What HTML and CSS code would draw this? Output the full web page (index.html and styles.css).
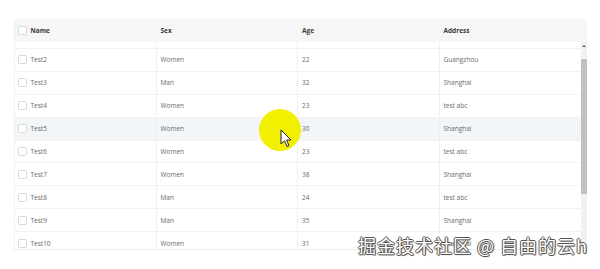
FILE: index.html
```html
<!DOCTYPE html>
<html>
<head>
<meta charset="utf-8">
<link rel="stylesheet" href="styles.css">
</head>
<body>
<div class="table">
  <div class="head">
    <div class="cell c-name"><span class="cb"></span>Name</div>
    <div class="cell">Sex</div>
    <div class="cell">Age</div>
    <div class="cell">Address</div>
  </div>
  <div class="body">
    <div class="rows">
      <div class="row partial"><div class="cell c-name"></div><div class="cell"></div><div class="cell"></div><div class="cell"></div></div>
      <div class="row"><div class="cell c-name"><span class="cb"></span>Test2</div><div class="cell">Women</div><div class="cell">22</div><div class="cell">Guangzhou</div></div>
      <div class="row"><div class="cell c-name"><span class="cb"></span>Test3</div><div class="cell">Man</div><div class="cell">32</div><div class="cell">Shanghai</div></div>
      <div class="row"><div class="cell c-name"><span class="cb"></span>Test4</div><div class="cell">Women</div><div class="cell">23</div><div class="cell">test abc</div></div>
      <div class="row hover"><div class="cell c-name"><span class="cb"></span>Test5</div><div class="cell">Women</div><div class="cell">30</div><div class="cell">Shanghai</div></div>
      <div class="row"><div class="cell c-name"><span class="cb"></span>Test6</div><div class="cell">Women</div><div class="cell">23</div><div class="cell">test abc</div></div>
      <div class="row"><div class="cell c-name"><span class="cb"></span>Test7</div><div class="cell">Women</div><div class="cell">38</div><div class="cell">Shanghai</div></div>
      <div class="row"><div class="cell c-name"><span class="cb"></span>Test8</div><div class="cell">Man</div><div class="cell">24</div><div class="cell">test abc</div></div>
      <div class="row"><div class="cell c-name"><span class="cb"></span>Test9</div><div class="cell">Man</div><div class="cell">35</div><div class="cell">Shanghai</div></div>
      <div class="row"><div class="cell c-name"><span class="cb"></span>Test10</div><div class="cell">Women</div><div class="cell">31</div><div class="cell">Shanghai</div></div>
    </div>
    <div class="scrollbar">
      <div class="arrow"></div>
      <div class="thumb"></div>
    </div>
  </div>
</div>
<div class="spot"></div>
<svg class="cursor" width="12" height="19" viewBox="0 0 12 19">
  <path d="M1 1 L1 15 L4.5 11.8 L7 17.5 L9 16.6 L6.6 11 L11 11 Z" fill="#fff" stroke="#222" stroke-width="1" stroke-linejoin="round"/>
</svg>
<div class="watermark">掘金技术社区 @ 自由的云h</div>
</body>
</html>
```
FILE: styles.css
```css
html, body {
  margin: 0;
  padding: 0;
  background: #fff;
  width: 600px;
  height: 269px;
  overflow: hidden;
  font-family: "Open Sans", "Liberation Sans", sans-serif;
}
.table {
  margin: 19px 0 0 14px;
  width: 573px;
  border-left: 1px solid #f0f0f0;
  box-sizing: border-box;
}
.head {
  display: flex;
  height: 23px;
  background: #f6f6f7;
  border-radius: 4px 4px 0 0;
  font-weight: 700;
  color: #3a3a3a;
  font-size: 6.5px;
}
.head .cell {
  width: 141.5px;
}
.head .cell:last-child {
  flex: 1;
}
.cell {
  display: flex;
  align-items: center;
  box-sizing: border-box;
  padding-left: 4px;
  width: 141.5px;
  border-right: 1px solid #f0f0f0;
}
.head .cell { border-right: none; }
.c-name { padding-left: 3px; }
.cb {
  display: inline-block;
  width: 7px;
  height: 7px;
  border: 1px solid #d9d9d9;
  border-radius: 1.5px;
  background: #fff;
  margin-right: 3.5px;
  flex: none;
}
.body {
  display: flex;
  height: 207px;
  overflow: hidden;
  border-bottom: 1px solid #eeeeee;
}
.rows {
  width: 566px;
  font-size: 6.5px;
  color: #6a6a6a;
}
.row {
  display: flex;
  height: 22.9px;
  border-bottom: 1px solid #f2f2f2;
  box-sizing: border-box;
}
.row.partial { height: 7px; }
.row .cell:last-child { border-right: none; flex: 1; }
.row.hover { background: #f3f6f9; }
.scrollbar {
  width: 8px;
  background: #f1f1f1;
}
.arrow {
  margin: 3px auto 0;
  width: 0;
  height: 0;
  border-left: 2px solid transparent;
  border-right: 2px solid transparent;
  border-bottom: 2.5px solid #555;
}
.thumb {
  margin: 12px auto 0;
  width: 6px;
  height: 135px;
  background: #c1c1c1;
}
.spot {
  position: absolute;
  left: 259px;
  top: 109px;
  width: 42px;
  height: 42px;
  border-radius: 50%;
  background: #f2ef00;
}
.cursor {
  position: absolute;
  left: 280px;
  top: 129px;
}
.watermark {
  position: absolute;
  left: 358px;
  top: 234px;
  font-family: "Noto Sans CJK SC", sans-serif;
  font-size: 18px;
  letter-spacing: 1px;
  line-height: 22px;
  color: #fff;
  white-space: nowrap;
  text-shadow: 1px 0 0 #555, -1px 0 0 #555, 0 1px 0 #555, 0 -1px 0 #555, 1px 1px 1px #777;
}
```
